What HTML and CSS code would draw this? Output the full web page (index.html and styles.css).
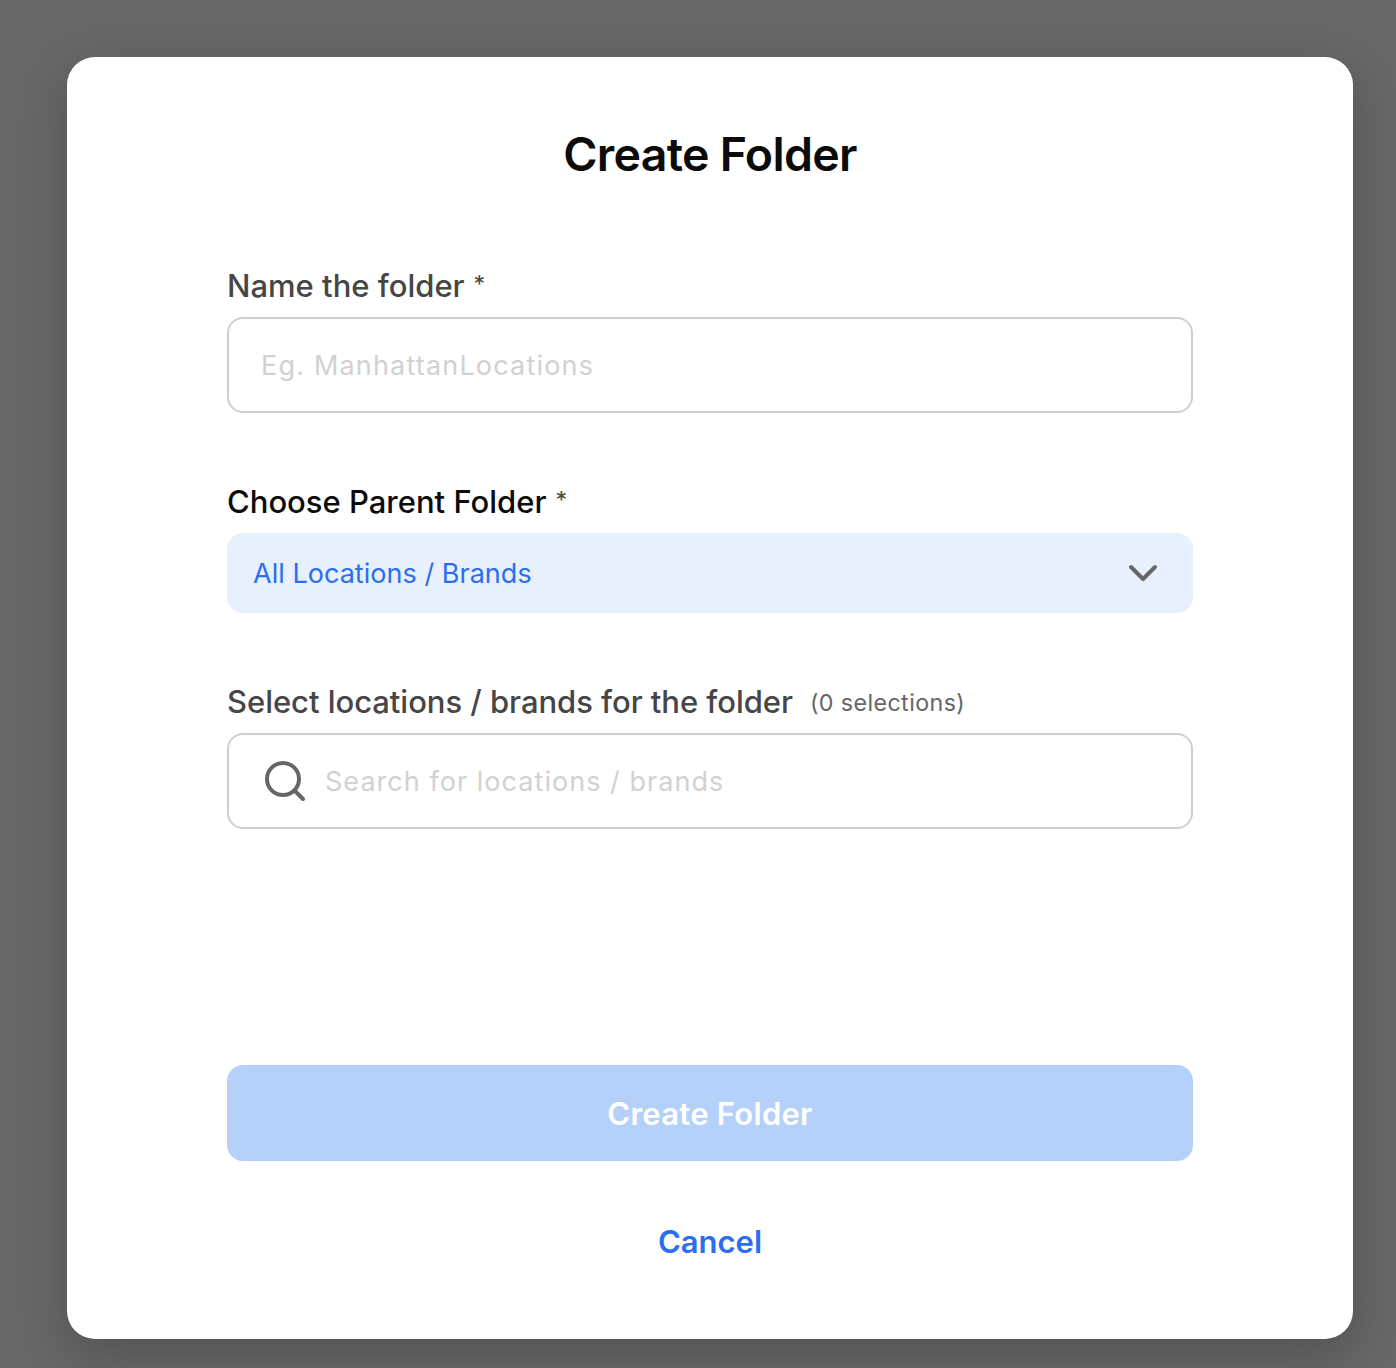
FILE: index.html
```html
<!DOCTYPE html>
<html lang="en">
<head>
<meta charset="utf-8">
<title>Create Folder</title>
<link rel="stylesheet" href="styles.css">
</head>
<body>
<main class="modal" role="dialog" aria-labelledby="title">
  <h1 class="title" id="title">Create Folder</h1>
  <form class="form">
    <div class="field">
      <div class="label-row">
        <label class="label" for="name">Name the folder</label>
        <span class="required">*</span>
      </div>
      <div class="input-box">
        <input class="input" id="name" type="text" placeholder="Eg. ManhattanLocations">
      </div>
    </div>
    <div class="field">
      <div class="label-row">
        <span class="label label-dark">Choose Parent Folder</span>
        <span class="required">*</span>
      </div>
      <button class="select" type="button">
        <span>All Locations / Brands</span>
        <svg class="chevron" viewBox="0 0 32 20" width="32" height="20"><path d="M4 4l12 12L28 4"/></svg>
      </button>
    </div>
    <div class="field">
      <div class="label-row">
        <label class="label label-long" for="search">Select locations / brands for the folder</label>
        <span class="count">(0 selections)</span>
      </div>
      <div class="input-box search-box">
        <svg class="search-icon" viewBox="0 0 40 40" width="40" height="40"><circle cx="18" cy="18" r="16"/><path d="M29.5 29.5L38 38"/></svg>
        <input class="input input-search" id="search" type="text" placeholder="Search for locations / brands">
      </div>
    </div>
    <div class="actions">
      <button class="submit" type="submit">Create Folder</button>
      <button class="cancel" type="button">Cancel</button>
    </div>
  </form>
</main>
</body>
</html>
```
FILE: styles.css
```css
* {
  box-sizing: border-box;
}

body {
  margin: 0;
  min-height: 1368px;
  padding: 57px 43px 0 67px;
  background: #676767;
  font-family: Inter, "Liberation Sans", sans-serif;
  overflow: hidden;
}

button,
input {
  margin: 0;
  padding: 0;
  border: 0;
  background: none;
  font-family: inherit;
}

.modal {
  height: 1282px;
  padding: 69px 160px 0;
  background: #fff;
  border-radius: 28px;
  box-shadow: 0 16px 48px rgba(0, 0, 0, 0.2);
}

.title {
  margin: 0 0 84px;
  color: #0b0b0b;
  font-size: 46.5px;
  font-weight: 600;
  line-height: 56px;
  letter-spacing: -0.72px;
  text-align: center;
}

.form {
  display: flex;
  flex-direction: column;
  gap: 69px;
}

.field {
  display: flex;
  flex-direction: column;
  gap: 11px;
}

.label-row {
  display: flex;
  align-items: center;
  height: 40px;
}

.label {
  color: #464646;
  font-size: 31px;
  font-weight: 500;
  line-height: 40px;
}

.label-dark {
  color: #0b0b0b;
}

.label-long {
  letter-spacing: -0.04px;
}

.required {
  margin-left: 9px;
  padding-bottom: 5px;
  color: #464646;
  font-size: 23.25px;
}

.count {
  margin-left: 17px;
  color: #666;
  font-size: 23.25px;
  letter-spacing: 0.4px;
}

.input-box {
  display: flex;
  align-items: center;
  height: 96px;
  padding: 0 32px;
  border: 2px solid #cfcfcf;
  border-radius: 16px;
}

.input {
  flex: 1;
  height: 60px;
  color: #464646;
  font-size: 27px;
  letter-spacing: 1.18px;
  outline: none;
}

.input::placeholder {
  color: #d1d1d1;
  opacity: 1;
}

.search-box {
  gap: 20px;
  padding-left: 36px;
}

.input-search {
  letter-spacing: 1.04px;
}

.search-icon,
.chevron {
  flex: none;
  fill: none;
  stroke: #666;
  stroke-width: 4;
  stroke-linecap: round;
  stroke-linejoin: round;
}

.select {
  display: flex;
  align-items: center;
  justify-content: space-between;
  height: 80px;
  padding: 0 34px 0 26px;
  background: #e8f0fe;
  border-radius: 16px;
  color: #2b6eee;
  font-size: 27px;
  letter-spacing: 0.03px;
}

.actions {
  display: flex;
  flex-direction: column;
  gap: 61px;
  margin-top: 167px;
}

.submit {
  height: 96px;
  background: #b5d1f9;
  border-radius: 16px;
  color: #fff;
  font-size: 31px;
  font-weight: 600;
  letter-spacing: 0.27px;
}

.cancel {
  align-self: center;
  color: #2b6eee;
  font-size: 31px;
  font-weight: 600;
  line-height: 40px;
}
```
